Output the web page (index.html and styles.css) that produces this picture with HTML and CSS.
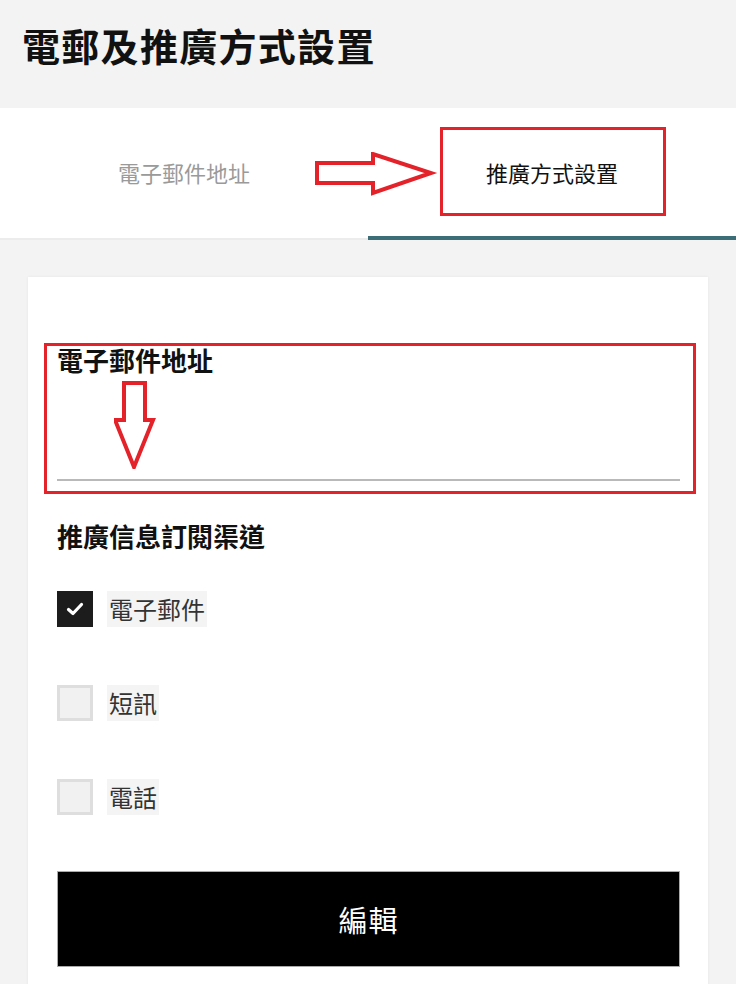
FILE: index.html
```html
<!DOCTYPE html>
<html lang="zh-Hant">
<head>
<meta charset="utf-8">
<title>電郵及推廣方式設置</title>
<link rel="stylesheet" href="styles.css">
</head>
<body>
<header class="page-head">
  <h1 class="page-title">電郵及推廣方式設置</h1>
</header>
<nav class="tabs">
  <div class="tab">電子郵件地址</div>
  <div class="tab tab-active">推廣方式設置
    <span class="mark-box mark-tab"></span>
  </div>
  <svg class="arrow-right" width="124" height="46" viewBox="0 0 124 46">
    <polygon points="3,11 59,11 59,2 117,21 59,41 59,31 3,31" fill="none" stroke="#e3222a" stroke-width="4" stroke-linejoin="miter"/>
  </svg>
</nav>
<main class="main">
  <section class="card">
    <div class="field">
      <div class="field-label">電子郵件地址</div>
      <div class="field-input"></div>
    </div>
    <h2 class="group-title">推廣信息訂閱渠道</h2>
    <ul class="checks">
      <li class="check-row"><span class="box box-on"><svg width="18" height="14" viewBox="0 0 18 14"><path d="M2.5 7.5 L7 11.5 L15.5 2.5" fill="none" stroke="#fff" stroke-width="3.2" stroke-linecap="round" stroke-linejoin="round"/></svg></span><span class="check-label">電子郵件</span></li>
      <li class="check-row"><span class="box"></span><span class="check-label">短訊</span></li>
      <li class="check-row"><span class="box"></span><span class="check-label">電話</span></li>
    </ul>
    <button class="edit-btn" type="button">編輯</button>
    <span class="mark-box mark-field"></span>
    <svg class="arrow-down" width="46" height="88" viewBox="0 0 46 88">
      <polygon points="10,2 31,2 31,39 39,39 20,86 1,39 10,39" fill="none" stroke="#e3222a" stroke-width="4" stroke-linejoin="miter"/>
    </svg>
  </section>
</main>
</body>
</html>
```

FILE: styles.css
```css
* { box-sizing: border-box; }
html, body {
  margin: 0;
  padding: 0;
  background: #f3f3f3;
  font-family: "Noto Sans CJK TC", "Noto Sans", sans-serif;
  color: #111;
}
body { width: 736px; height: 984px; overflow: hidden; }

.page-head {
  height: 108px;
  padding: 20px 0 0 22px;
}
.page-title {
  margin: 0;
  font-size: 38px;
  line-height: 50px;
  font-weight: 700;
  letter-spacing: 1.3px;
  color: #111;
}

.tabs {
  position: relative;
  display: grid;
  grid-template-columns: 1fr 1fr;
  background: #fff;
  height: 132px;
}
.tab {
  position: relative;
  height: 132px;
  padding-top: 49px;
  text-align: center;
  font-size: 22px;
  line-height: 30px;
  color: #9a9a9a;
  border-bottom: 2px solid #ececec;
}
.tab-active {
  color: #111;
  border-bottom: 4px solid #3b6e77;
}
.mark-box {
  position: absolute;
  border: 3px solid #e3222a;
  pointer-events: none;
}
.mark-tab {
  left: 72px;
  top: 19px;
  width: 226px;
  height: 89px;
}
.arrow-right {
  position: absolute;
  left: 314px;
  top: 44px;
}

.main {
  padding: 37px 28px 0;
}
.card {
  position: relative;
  background: #fff;
  box-shadow: 0 0 3px rgba(0,0,0,0.06);
  padding: 66px 28px 40px 29px;
  min-height: 720px;
}
.field-label {
  font-size: 26px;
  line-height: 34px;
  font-weight: 700;
  color: #111;
}
.field-input {
  height: 104px;
  border-bottom: 2px solid #b9b9b9;
}
.mark-field {
  left: 16px;
  top: 66px;
  width: 652px;
  height: 151px;
}
.arrow-down {
  position: absolute;
  left: 86px;
  top: 104px;
}

.group-title {
  margin: 38px 0 0;
  font-size: 26px;
  line-height: 34px;
  font-weight: 700;
  color: #111;
}
.checks {
  list-style: none;
  margin: 38px 0 0;
  padding: 0;
  display: flex;
  flex-direction: column;
  gap: 58px;
}
.check-row {
  display: flex;
  align-items: center;
  gap: 14px;
  height: 36px;
}
.box {
  width: 36px;
  height: 36px;
  flex: none;
  background: #f1f1f1;
  border: 3px solid #dedede;
  display: flex;
  align-items: center;
  justify-content: center;
}
.box-on {
  background: #1c1c1c;
  border-color: #1c1c1c;
}
.check-label {
  background: #f4f4f4;
  padding: 0 2px;
  font-size: 24px;
  line-height: 36px;
  color: #333;
}

.edit-btn {
  display: block;
  width: 100%;
  height: 96px;
  margin-top: 56px;
  background: #000;
  border: 1px solid #aaa;
  color: #fff;
  font-family: inherit;
  font-size: 29px;
  letter-spacing: 1px;
}
```
